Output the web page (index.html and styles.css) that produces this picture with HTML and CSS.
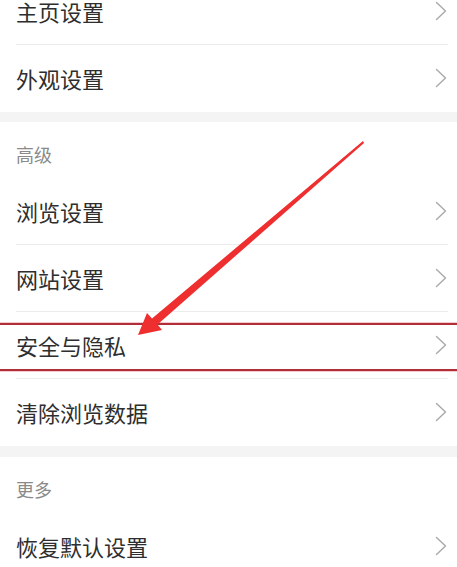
FILE: index.html
```html
<!DOCTYPE html>
<html lang="zh-CN">
<head>
<meta charset="utf-8">
<title>设置</title>
<link rel="stylesheet" href="styles.css">
</head>
<body>
<div class="page">
  <div class="group first">
    <div class="row"><span class="label">主页设置</span><svg class="chev" viewBox="0 0 12 20" width="12" height="20"><polyline points="1.5,1.5 10.5,10 1.5,18.5"/></svg></div>
    <div class="row last"><span class="label">外观设置</span><svg class="chev" viewBox="0 0 12 20" width="12" height="20"><polyline points="1.5,1.5 10.5,10 1.5,18.5"/></svg></div>
  </div>
  <div class="band"></div>
  <div class="group">
    <div class="header">高级</div>
    <div class="row"><span class="label">浏览设置</span><svg class="chev" viewBox="0 0 12 20" width="12" height="20"><polyline points="1.5,1.5 10.5,10 1.5,18.5"/></svg></div>
    <div class="row"><span class="label">网站设置</span><svg class="chev" viewBox="0 0 12 20" width="12" height="20"><polyline points="1.5,1.5 10.5,10 1.5,18.5"/></svg></div>
    <div class="row highlighted"><span class="label">安全与隐私</span><svg class="chev" viewBox="0 0 12 20" width="12" height="20"><polyline points="1.5,1.5 10.5,10 1.5,18.5"/></svg><div class="mark-box"></div></div>
    <div class="row last"><span class="label">清除浏览数据</span><svg class="chev" viewBox="0 0 12 20" width="12" height="20"><polyline points="1.5,1.5 10.5,10 1.5,18.5"/></svg></div>
  </div>
  <div class="band band2"></div>
  <div class="group">
    <div class="header">更多</div>
    <div class="row last"><span class="label">恢复默认设置</span><svg class="chev" viewBox="0 0 12 20" width="12" height="20"><polyline points="1.5,1.5 10.5,10 1.5,18.5"/></svg></div>
  </div>
  <svg class="arrow" viewBox="0 0 457 567" width="457" height="567">
    <polygon points="363,141 364,143 157.5,324.5 162,330 138,335 147,313 152,318.5"/>
  </svg>
</div>
</body>
</html>
```
FILE: styles.css
```css
html, body {
  margin: 0;
  padding: 0;
  background: #ffffff;
}
body {
  font-family: "Noto Sans CJK SC", "Noto Sans", sans-serif;
  color: #2e2e2e;
  width: 457px;
  height: 567px;
  overflow: hidden;
}
.page {
  position: relative;
  width: 457px;
  height: 567px;
  overflow: hidden;
}
.group {
  display: flex;
  flex-direction: column;
}
.group.first {
  margin-top: -22px;
}
.row {
  position: relative;
  box-sizing: border-box;
  height: 67px;
  margin: 0 9px 0 16px;
  padding-bottom: 1px;
  border-bottom: 1px solid #ececec;
  display: flex;
  align-items: center;
  justify-content: space-between;
}
.row.last {
  border-bottom: none;
}
.label {
  font-size: 22px;
  line-height: 28px;
  color: #2e2e2e;
}
.chev {
  margin-right: 1px;
  fill: none;
  stroke: #a9a9a9;
  stroke-width: 1.4;
  stroke-linecap: round;
  stroke-linejoin: round;
}
.band {
  height: 10px;
  background: #f4f4f4;
}
.band2 {
  height: 11px;
}
.header {
  box-sizing: border-box;
  height: 56px;
  padding: 22px 0 0 16px;
  font-size: 18px;
  line-height: 20px;
  color: #8a8a8a;
}
.mark-box {
  position: absolute;
  left: -16px;
  right: -9px;
  top: 11px;
  height: 44px;
  border-top: 2px solid #b02e38;
  border-bottom: 2px solid #b02e38;
  box-shadow: 0 -1px 0 rgba(230, 120, 130, 0.4), 0 1px 0 rgba(230, 120, 130, 0.4);
  pointer-events: none;
}
.arrow {
  position: absolute;
  left: 0;
  top: 0;
  pointer-events: none;
}
.arrow polygon {
  fill: #ef2f2f;
}
```
